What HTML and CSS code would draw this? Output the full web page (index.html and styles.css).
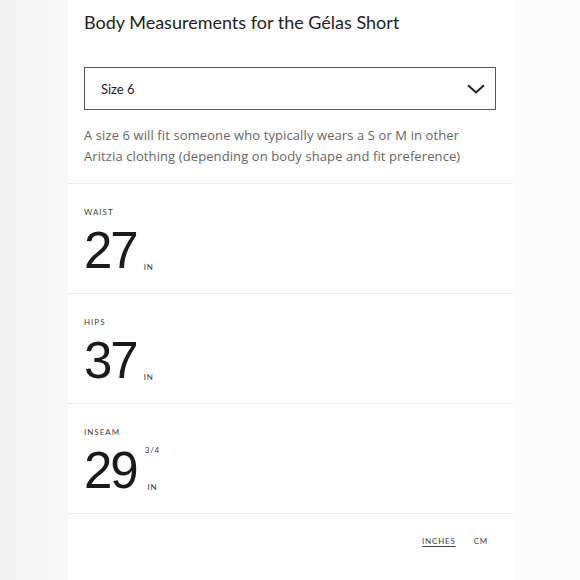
FILE: index.html
```html
<!DOCTYPE html>
<html lang="en">
<head>
<meta charset="utf-8">
<title>Body Measurements</title>
<link rel="stylesheet" href="styles.css">
</head>
<body>
<div class="page">
  <div class="panel">
    <section class="header">
      <h1 class="title">Body Measurements for the Gélas Short</h1>
      <div class="select">
        <span class="select-value">Size 6</span>
        <svg class="chevron" width="18" height="10" viewBox="0 0 18 10"><path d="M1 1.2 L9 8.5 L17 1.2" fill="none" stroke="#222" stroke-width="2"/></svg>
      </div>
      <p class="desc">A size 6 will fit someone who typically wears a S or M in other Aritzia clothing (depending on body shape and fit preference)</p>
    </section>
    <section class="measure">
      <div class="label">WAIST</div>
      <div class="value-row">
        <span class="num">27</span>
        <span class="unit-col"><span class="unit">IN</span></span>
      </div>
    </section>
    <section class="measure">
      <div class="label">HIPS</div>
      <div class="value-row">
        <span class="num">37</span>
        <span class="unit-col"><span class="unit">IN</span></span>
      </div>
    </section>
    <section class="measure">
      <div class="label">INSEAM</div>
      <div class="value-row">
        <span class="num">29</span>
        <span class="unit-col frac-col"><span class="frac">3/4</span><span class="unit">IN</span></span>
      </div>
    </section>
    <footer class="footer">
      <span class="toggle active">INCHES</span>
      <span class="toggle">CM</span>
    </footer>
  </div>
</div>
</body>
</html>
```

FILE: styles.css
```css
html, body {
  margin: 0;
  padding: 0;
}
body {
  width: 580px;
  height: 580px;
  overflow: hidden;
  background: linear-gradient(90deg, #f3f3f3 0%, #f8f8f8 10%, #fafafa 20%, #fbfbfb 80%, #fcfcfc 100%);
  font-family: "Lato", "Liberation Sans", sans-serif;
  color: #222;
}
.page {
  padding-left: 68px;
}
.panel {
  width: 445px;
  height: 580px;
  background: #fff;
}
.header {
  padding: 11px 17px 0 16px;
  height: 172px;
  border-bottom: 1px solid #ebebeb;
}
.title {
  margin: 0;
  font-size: 18px;
  font-weight: 400;
  line-height: 22px;
  color: #222;
}
.select {
  margin-top: 34px;
  height: 41px;
  border: 1.5px solid #555;
  display: flex;
  align-items: center;
  justify-content: space-between;
  padding: 0 10px 0 16px;
}
.select-value {
  font-size: 13px;
  color: #222;
}
.chevron {
  display: block;
}
.desc {
  margin: 15px 0 0;
  font-family: "Open Sans", "Lato", sans-serif;
  font-size: 13px;
  line-height: 21px;
  letter-spacing: 0.1px;
  color: #666;
}
.measure {
  height: 109px;
  border-bottom: 1px solid #ebebeb;
  padding: 0 16px;
}
.label {
  padding-top: 23px;
  font-size: 8px;
  line-height: 10px;
  letter-spacing: 1px;
  color: #444;
}
.value-row {
  display: flex;
  align-items: stretch;
  margin-top: 8px;
}
.num {
  font-family: "Liberation Sans", sans-serif;
  font-size: 51px;
  line-height: 52px;
  color: #1a1a1a;
  letter-spacing: -2px;
}
.unit-col {
  display: flex;
  flex-direction: column;
  justify-content: flex-end;
  align-items: center;
  margin-left: 7px;
  padding-bottom: 5px;
}
.frac-col {
  justify-content: space-between;
  margin-left: 8px;
}
.frac, .unit {
  font-size: 8px;
  line-height: 10px;
  letter-spacing: 0.8px;
  color: #333;
}
.footer {
  display: flex;
  justify-content: flex-end;
  gap: 18px;
  padding: 22px 25px 0 0;
}
.toggle {
  font-size: 8px;
  line-height: 10px;
  letter-spacing: 0.8px;
  color: #444;
}
.toggle.active {
  text-decoration: underline;
  text-underline-offset: 2px;
}
```
